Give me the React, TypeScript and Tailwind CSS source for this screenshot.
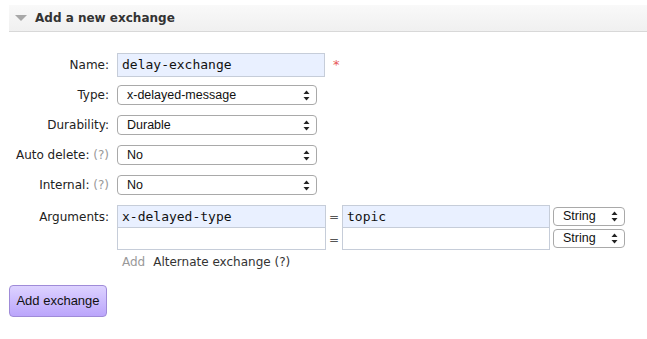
import React from "react";

const lbl = "w-[117px] pr-[8px] text-right text-[12px] text-[#222] shrink-0";
const verdana = { fontFamily: '"DejaVu Sans", Verdana, sans-serif' };

function Arrows() {
  return (
    <svg width="7" height="11" viewBox="0 0 7 11" className="shrink-0">
      <path d="M3.5 0.5 L6.5 4 L0.5 4 Z" fill="#222" />
      <path d="M3.5 10.5 L6.5 7 L0.5 7 Z" fill="#222" />
    </svg>
  );
}

function Select({ text, w, h = 20 }: { text: string; w: string; h?: number }) {
  return (
    <div
      className={`${w} flex items-center justify-between rounded-[4px] border border-[#a9a9a9] bg-white pl-[9px] pr-[6px] text-[12.5px] text-[#111]`}
      style={{ height: h, fontFamily: '"Liberation Sans", Arial, sans-serif' }}
    >
      <span>{text}</span>
      <Arrows />
    </div>
  );
}

export default function App() {
  return (
    <div className="w-[647px] h-[339px] bg-white" style={verdana}>
      <div className="pt-[5px] pl-[9px]">
        <div className="flex h-[27px] items-center border-b border-[#d8d8d8] bg-gradient-to-b from-[#f9f9f9] to-[#f0f0f0]">
          <svg width="12" height="7" viewBox="0 0 12 7" className="ml-[6px] mr-[8px]">
            <path d="M0 0 L12 0 L6 6 Z" fill="#a8a8a8" />
          </svg>
          <span className="text-[12px] font-bold text-[#333]">Add a new exchange</span>
        </div>
      </div>

      <div className="pl-0 pt-[21px]">
        {/* Name */}
        <div className="flex items-center h-[24px]">
          <div className={lbl}>Name:</div>
          <div
            className="flex h-[24px] w-[208px] items-center border border-[#c6cdd9] bg-[#e9f0ff] px-[4px] text-[13px] text-[#111]"
            style={{ fontFamily: '"DejaVu Sans Mono", Menlo, monospace' }}
          >
            delay-exchange
          </div>
          <span className="ml-[8px] text-[13px] text-[#e85a5a]">*</span>
        </div>

        <div className="mt-[8px] flex items-center h-[20px]">
          <div className={lbl}>Type:</div>
          <Select text="x-delayed-message" w="w-[200px]" />
        </div>
        <div className="mt-[10px] flex items-center h-[20px]">
          <div className={lbl}>Durability:</div>
          <Select text="Durable" w="w-[200px]" />
        </div>
        <div className="mt-[10px] flex items-center h-[20px]">
          <div className={lbl}>
            Auto delete: <span className="text-[#999]">(?)</span>
          </div>
          <Select text="No" w="w-[200px]" />
        </div>
        <div className="mt-[10px] flex items-center h-[20px]">
          <div className={lbl}>
            Internal: <span className="text-[#999]">(?)</span>
          </div>
          <Select text="No" w="w-[200px]" />
        </div>

        {/* Arguments */}
        <div className="mt-[10px] flex items-start">
          <div className={`${lbl} pt-[3px]`}>Arguments:</div>
          <div className="flex flex-col">
            <div className="flex items-center">
              <div
                className="flex h-[23px] w-[209px] items-center border border-[#c6cdd9] bg-[#e9f0ff] px-[4px] text-[13px] text-[#111]"
                style={{ fontFamily: '"DejaVu Sans Mono", Menlo, monospace' }}
              >
                x-delayed-type
              </div>
              <span className="w-[16px] text-center text-[12px] text-[#555]">=</span>
              <div
                className="flex h-[23px] w-[208px] items-center border border-[#c6cdd9] bg-[#e9f0ff] px-[4px] text-[13px] text-[#111]"
                style={{ fontFamily: '"DejaVu Sans Mono", Menlo, monospace' }}
              >
                topic
              </div>
              <div className="ml-[3px]">
                <Select text="String" w="w-[72px]" h={19} />
              </div>
            </div>
            <div className="flex items-start">
              <div className="h-[22px] w-[209px] border border-t-0 border-[#c6cdd9] bg-white" />
              <span className="w-[16px] pt-[3px] text-center text-[12px] text-[#555]">=</span>
              <div className="h-[22px] w-[208px] border border-t-0 border-[#c6cdd9] bg-white" />
              <div className="ml-[3px] pt-[1px]">
                <Select text="String" w="w-[72px]" h={19} />
              </div>
            </div>
            <div className="mt-[3px] flex items-center pl-[5px] text-[12px]">
              <span className="text-[#999]">Add</span>
              <span className="ml-[8px] text-[#333]">Alternate exchange (?)</span>
            </div>
          </div>
        </div>

        <div className="pl-[9px] pt-[14px]">
          <button
            className="h-[32px] w-[98px] rounded-[4px] border border-[#9f8bd8] bg-gradient-to-b from-[#ddd2ff] to-[#bba5fb] text-[13px] text-[#111]"
            style={{ fontFamily: '"Liberation Sans", Arial, sans-serif' }}
          >
            Add exchange
          </button>
        </div>
      </div>
    </div>
  );
}
